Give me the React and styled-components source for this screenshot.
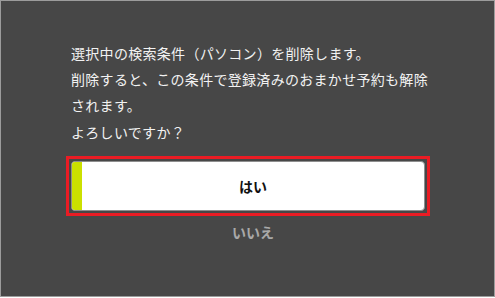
import React from 'react';
import styled, { createGlobalStyle } from 'styled-components';

const GlobalStyle = createGlobalStyle`
  html, body {
    margin: 0;
    padding: 0;
    background: #ffffff;
  }
  * {
    box-sizing: border-box;
  }
`;

const Frame = styled.div`
  width: 495px;
  height: 297px;
  border: 1px solid #9c9c9c;
  background: #474747;
  font-family: "Noto Sans CJK JP", "Noto Sans", sans-serif;
  padding: 39px 0 0 65px;
`;

const Column = styled.div`
  width: 364px;
  display: flex;
  flex-direction: column;
`;

const Message = styled.p`
  margin: 0 0 ${(p) => p.gap || 0}px;
  padding-left: 5px;
  color: #f2f2f2;
  font-size: 14px;
  line-height: 26px;
  letter-spacing: 0.3px;
`;

const Highlight = styled.div`
  margin-top: 11px;
  border: 3px solid #ea1c24;
  padding: 2px;
`;

const YesButton = styled.button`
  display: flex;
  width: 100%;
  height: 50px;
  padding: 0;
  border: 1px solid #8e8e8e;
  border-radius: 4px;
  overflow: hidden;
  background: #ffffff;
  cursor: pointer;
  font-family: inherit;
`;

const Stripe = styled.span`
  width: 10px;
  flex: none;
  background: #cbe000;
`;

const Label = styled.span`
  flex: 1;
  align-self: center;
  text-align: center;
  color: #111111;
  font-size: 14px;
  font-weight: 700;
`;

const NoButton = styled.button`
  align-self: center;
  margin: 6px 0 0 10px;
  padding: 0;
  border: none;
  background: none;
  color: #a9a9a9;
  font-family: inherit;
  font-size: 14px;
  font-weight: 700;
  line-height: 20px;
  cursor: pointer;
`;

export default function App() {
  return (
    <>
      <GlobalStyle />
      <Frame>
        <Column>
          <Message gap={1}>
            選択中の検索条件（パソコン）を削除します。
            <br />
            削除すると、この条件で登録済みのおまかせ予約も解除されます。
          </Message>
          <Message>よろしいですか？</Message>
          <Highlight>
            <YesButton>
              <Stripe />
              <Label>はい</Label>
            </YesButton>
          </Highlight>
          <NoButton>いいえ</NoButton>
        </Column>
      </Frame>
    </>
  );
}
